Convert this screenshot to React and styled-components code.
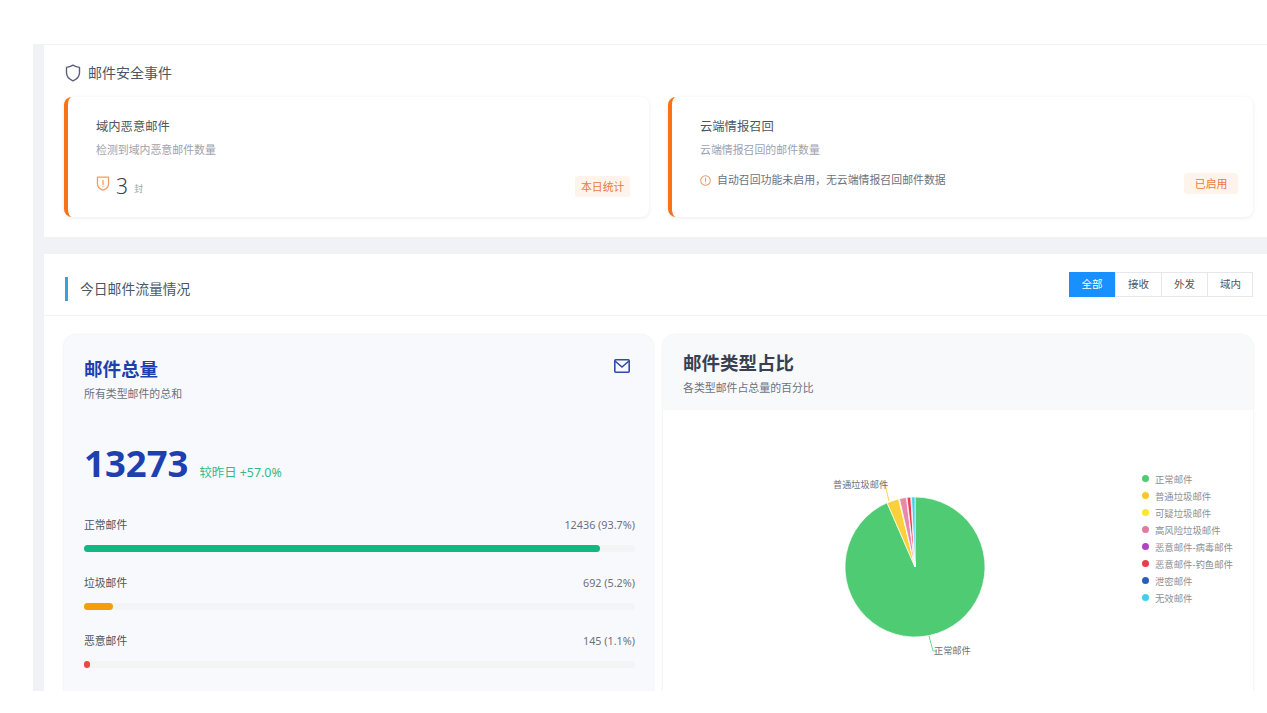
import React from 'react';
import styled, { createGlobalStyle } from 'styled-components';

const FONT = `"Noto Sans", "Noto Sans CJK SC", sans-serif`;

const stats = [
	{ name: '正常邮件', value: '12436 (93.7%)', width: 93.7, color: '#10b981' },
	{ name: '垃圾邮件', value: '692 (5.2%)', width: 5.2, color: '#f59e0b' },
	{ name: '恶意邮件', value: '145 (1.1%)', width: 1.1, color: '#ef4444' },
];

const legend = [
	{ name: '正常邮件', color: '#4fcb74' },
	{ name: '普通垃圾邮件', color: '#fbc62f' },
	{ name: '可疑垃圾邮件', color: '#f9e926' },
	{ name: '高风险垃圾邮件', color: '#e07b9f' },
	{ name: '恶意邮件-病毒邮件', color: '#b044c4' },
	{ name: '恶意邮件-钓鱼邮件', color: '#ee3a4a' },
	{ name: '泄密邮件', color: '#2a5fb8' },
	{ name: '无效邮件', color: '#3dd0ea' },
];

// angles in degrees, clockwise from 12 o'clock
const slices = [
	{ from: 0, to: 336.5, color: '#4fcb74' },
	{ from: 336.5, to: 346.5, color: '#fbd03a' },
	{ from: 346.5, to: 347.2, color: '#f9e926' },
	{ from: 347.2, to: 353, color: '#e58aaa' },
	{ from: 353, to: 353.5, color: '#b044c4' },
	{ from: 353.5, to: 356.6, color: '#ee3a4a' },
	{ from: 356.6, to: 357.2, color: '#2a5fb8' },
	{ from: 357.2, to: 360, color: '#3dd0ea' },
];

const CX = 252;
const CY = 157;
const R = 70;

const point = (deg, r = R) => {
	const rad = (deg * Math.PI) / 180;
	return [CX + r * Math.sin(rad), CY - r * Math.cos(rad)];
};

const slicePath = ({ from, to }) => {
	const [x1, y1] = point(from);
	const [x2, y2] = point(to);
	return `M${CX} ${CY}L${x1} ${y1}A${R} ${R} 0 ${to - from > 180 ? 1 : 0} 1 ${x2} ${y2}Z`;
};

const App = () => (
	<>
		<GlobalStyle />
		<Shell>
			<SecurityPanel>
				<SectionTitle>
					<svg width="16" height="18" viewBox="0 0 16 18" fill="none" stroke="#5b5f7a" strokeWidth="1.400" strokeLinejoin="round">
						<path d="M8 1.200c2.100 1.300 4.300 2 6.500 2.200v5.400c0 3.600-2.600 6.400-6.500 8-3.900-1.600-6.500-4.400-6.500-8V3.400C3.700 3.200 5.900 2.500 8 1.200z" />
					</svg>
					邮件安全事件
				</SectionTitle>
				<EventGrid>
					<EventCard>
						<EventTitle>域内恶意邮件</EventTitle>
						<EventSub>检测到域内恶意邮件数量</EventSub>
						<EventFoot>
							<Count>
								<svg width="14" height="17" viewBox="0 0 24 28" fill="none" stroke="#f59a62" strokeWidth="2.200" strokeLinejoin="round" strokeLinecap="round">
									<path d="M2.500 3h19v12c0 5.500-4.500 8.800-9.500 10.500C7 23.800 2.500 20.500 2.500 15z" />
									<path d="M12 8.500v7M12 19.200v.3" />
								</svg>
								<CountValue>3</CountValue>
								<CountUnit>封</CountUnit>
							</Count>
							<Badge $inset="4px" $top="11px">本日统计</Badge>
						</EventFoot>
					</EventCard>
					<EventCard>
						<EventTitle>云端情报召回</EventTitle>
						<EventSub>云端情报召回的邮件数量</EventSub>
						<EventFoot>
							<Notice>
								<svg width="11" height="11" viewBox="0 0 24 24" fill="none" stroke="#ee9a66" strokeWidth="2.200" strokeLinecap="round">
									<circle cx="12" cy="12" r="10.500" />
									<path d="M12 6.500v7M12 17.300v.3" />
								</svg>
								自动召回功能未启用，无云端情报召回邮件数据
							</Notice>
							<Badge $wide $top="4px">已启用</Badge>
						</EventFoot>
					</EventCard>
				</EventGrid>
			</SecurityPanel>

			<FlowPanel>
				<FlowHeader>
					<FlowTitle>今日邮件流量情况</FlowTitle>
					<Tabs>
						<Tab $active>全部</Tab>
						<Tab>接收</Tab>
						<Tab>外发</Tab>
						<Tab>域内</Tab>
					</Tabs>
				</FlowHeader>
				<FlowGrid>
					<TotalCard>
						<TotalHead>
							<div>
								<TotalTitle>邮件总量</TotalTitle>
								<TotalSub>所有类型邮件的总和</TotalSub>
							</div>
							<svg width="18" height="16" viewBox="0 0 18 16" fill="none" stroke="#2f4aa8" strokeWidth="1.600">
								<rect x="1.800" y="1.800" width="14.400" height="12.400" rx="1" />
								<path d="M2 3l7 6 7-6" />
							</svg>
						</TotalHead>
						<TotalLine>
							<TotalValue>13273</TotalValue>
							<TotalTrend>较昨日 +57.0%</TotalTrend>
						</TotalLine>
						<StatList>
							{stats.map(stat => (
								<Stat key={stat.name}>
									<StatRow>
										<StatName>{stat.name}</StatName>
										<StatValue>{stat.value}</StatValue>
									</StatRow>
									<Track>
										<Fill $color={stat.color} style={{ width: `${stat.width}%` }} />
									</Track>
								</Stat>
							))}
						</StatList>
					</TotalCard>
					<ChartCard>
						<ChartHead>
							<ChartTitle>邮件类型占比</ChartTitle>
							<ChartSub>各类型邮件占总量的百分比</ChartSub>
						</ChartHead>
						<ChartBody>
							<svg width="420" height="290" viewBox="0 0 420 290">
								{slices.map(slice => (
									<path key={slice.from} d={slicePath(slice)} fill={slice.color} stroke="#fff" strokeWidth="0.700" />
								))}
								<path d="M226 91L222 74 218 74" fill="none" stroke="#fbc62f" strokeWidth="0.800" />
								<path d="M266 226L270 241 274 241" fill="none" stroke="#4fcb74" strokeWidth="0.800" />
								<PieLabel x="170" y="78">普通垃圾邮件</PieLabel>
								<PieLabel x="271" y="244">正常邮件</PieLabel>
							</svg>
							<Legend>
								{legend.map(item => (
									<LegendItem key={item.name}>
										<LegendDot $color={item.color} />
										{item.name}
									</LegendItem>
								))}
							</Legend>
						</ChartBody>
					</ChartCard>
				</FlowGrid>
			</FlowPanel>
		</Shell>
	</>
);

const GlobalStyle = createGlobalStyle`
	html, body {
		margin: 0;
		height: 100%;
		background: #fff;
		overflow: hidden;
		font-family: ${FONT};
	}
`;

const Shell = styled.div`
	box-sizing: border-box;
	margin: 44px 0 0 33px;
	height: 647px;
	padding: 1px 0 0 11px;
	background: #f0f2f5;
	overflow: hidden;
	display: flex;
	flex-direction: column;
	gap: 17px;
`;

const SecurityPanel = styled.section`
	box-sizing: border-box;
	height: 192px;
	flex: none;
	background: #fff;
	padding: 18px 14px 0 20px;
`;

const SectionTitle = styled.h3`
	margin: 0 0 15px;
	height: 19px;
	display: flex;
	align-items: center;
	gap: 7px;
	font-size: 14px;
	font-weight: 400;
	line-height: 19px;
	color: #4b5563;

	svg {
		margin-left: 1px;
	}
`;

const EventGrid = styled.div`
	display: grid;
	grid-template-columns: 585px 585px;
	gap: 19px;
`;

const EventCard = styled.div`
	box-sizing: border-box;
	height: 120px;
	padding: 21px 15px 0 28px;
	background: #fff;
	border-left: 4px solid #f97316;
	border-radius: 8px;
	box-shadow: 0 1px 4px rgba(0, 0, 0, 0.08);
`;

const EventTitle = styled.div`
	font-size: 12.300px;
	line-height: 18px;
	color: #4b5563;
`;

const EventSub = styled.div`
	margin-top: 7px;
	font-size: 10.900px;
	line-height: 14px;
	color: #9ca3af;
`;

const EventFoot = styled.div`
	display: flex;
	justify-content: space-between;
	align-items: center;
	height: 24px;
	margin-top: 12px;
`;

const Count = styled.div`
	display: flex;
	align-items: center;
	gap: 6px;
	margin-top: 10px;

	svg {
		margin-top: -6px;
	}
`;

const CountValue = styled.span`
	font-size: 21px;
	font-weight: 300;
	line-height: 24px;
	color: #374151;
`;

const CountUnit = styled.span`
	margin-top: 5px;
	font-size: 9px;
	color: #9ca3af;
`;

const Notice = styled.div`
	display: flex;
	align-items: center;
	gap: 6px;
	margin-top: -2px;
	font-size: 10.900px;
	line-height: 16px;
	color: #6b7280;
`;

const Badge = styled.span`
	margin: ${({ $top }) => $top} ${({ $inset }) => $inset || 0} 0 0;
	padding: 0 ${({ $wide }) => ($wide ? '10.500px' : '5.500px')};
	height: 21px;
	line-height: 21px;
	font-size: 10.900px;
	color: #ea7a3c;
	background: #fff4ec;
	border-radius: 3px;
`;

const FlowPanel = styled.section`
	flex: 1;
	background: #fff;
	min-height: 0;
`;

const FlowHeader = styled.header`
	box-sizing: border-box;
	height: 62px;
	display: flex;
	justify-content: space-between;
	align-items: center;
	padding: 0 14px 0 21px;
	border-bottom: 1px solid #f0f2f5;
`;

const FlowTitle = styled.h3`
	margin: 8px 0 0;
	padding-left: 12px;
	border-left: 3px solid #3b9fe0;
	font-size: 13.800px;
	font-weight: 400;
	line-height: 24px;
	color: #4b5563;
`;

const Tabs = styled.div`
	display: flex;
	box-shadow: 0 0 0 1px #e5e7eb inset;
`;

const Tab = styled.div`
	box-sizing: border-box;
	width: 46px;
	height: 25px;
	line-height: 25px;
	text-align: center;
	font-size: 10.500px;
	color: ${({ $active }) => ($active ? '#fff' : '#4b5563')};
	background: ${({ $active }) => ($active ? '#1890ff' : 'transparent')};
	border-left: ${({ $active }) => ($active ? 'none' : '1px solid #e5e7eb')};
`;

const FlowGrid = styled.div`
	display: grid;
	grid-template-columns: 589px 590px;
	gap: 10px;
	padding: 19px 0 0 20px;
`;

const TotalCard = styled.div`
	box-sizing: border-box;
	height: 420px;
	padding: 20px 18px 0 20px;
	background: #f8f9fc;
	border-radius: 12px;
	box-shadow: 0 0 3px rgba(0, 0, 0, 0.1);
`;

const TotalHead = styled.div`
	display: flex;
	justify-content: space-between;
	align-items: flex-start;
	padding-right: 4px;

	svg {
		margin-top: 3px;
	}
`;

const TotalTitle = styled.h2`
	margin: 0;
	font-size: 18.500px;
	line-height: 28px;
	font-weight: 700;
	color: #1e40af;
`;

const TotalSub = styled.div`
	margin-top: 4px;
	font-size: 10.900px;
	line-height: 14px;
	color: #6b7280;
`;

const TotalLine = styled.div`
	display: flex;
	align-items: baseline;
	gap: 11px;
	margin-top: 35px;
	height: 54px;
`;

const TotalValue = styled.span`
	font-size: 36.500px;
	line-height: 54px;
	font-weight: 700;
	color: #1e40af;
`;

const TotalTrend = styled.span`
	font-size: 12.400px;
	color: #34b98a;
`;

const StatList = styled.div`
	display: flex;
	flex-direction: column;
	gap: 23px;
	margin-top: 27px;
`;

const Stat = styled.div`
	height: 35px;
`;

const StatRow = styled.div`
	display: flex;
	justify-content: space-between;
	font-size: 10.800px;
	line-height: 16px;
`;

const StatName = styled.span`
	color: #4b5563;
`;

const StatValue = styled.span`
	color: #6b7280;
`;

const Track = styled.div`
	margin-top: 12px;
	height: 7px;
	background: #f3f4f6;
	border-radius: 4px;
`;

const Fill = styled.div`
	height: 100%;
	min-width: 5px;
	background: ${({ $color }) => $color};
	border-radius: 4px;
`;

const ChartCard = styled.div`
	height: 420px;
	background: #fff;
	border-radius: 12px;
	box-shadow: 0 0 3px rgba(0, 0, 0, 0.1);
	overflow: hidden;
`;

const ChartHead = styled.div`
	box-sizing: border-box;
	height: 75px;
	padding: 14px 20px 0;
	background: #f8f9fb;
`;

const ChartTitle = styled.h2`
	margin: 0;
	font-size: 18.500px;
	line-height: 28px;
	font-weight: 700;
	color: #374151;
`;

const ChartSub = styled.div`
	margin-top: 4px;
	font-size: 10.900px;
	line-height: 14px;
	color: #6b7280;
`;

const ChartBody = styled.div`
	display: flex;
	justify-content: space-between;
	align-items: flex-start;
	padding-right: 20px;
`;

const PieLabel = styled.text`
	font-size: 9.200px;
	fill: #6b7280;
`;

const Legend = styled.ul`
	list-style: none;
	margin: 60px 0 0;
	padding: 0;
`;

const LegendItem = styled.li`
	display: flex;
	align-items: center;
	gap: 6px;
	height: 17px;
	font-size: 9.400px;
	color: #8a8f99;
`;

const LegendDot = styled.span`
	width: 7px;
	height: 7px;
	border-radius: 50%;
	background: ${({ $color }) => $color};
`;

export default App;
